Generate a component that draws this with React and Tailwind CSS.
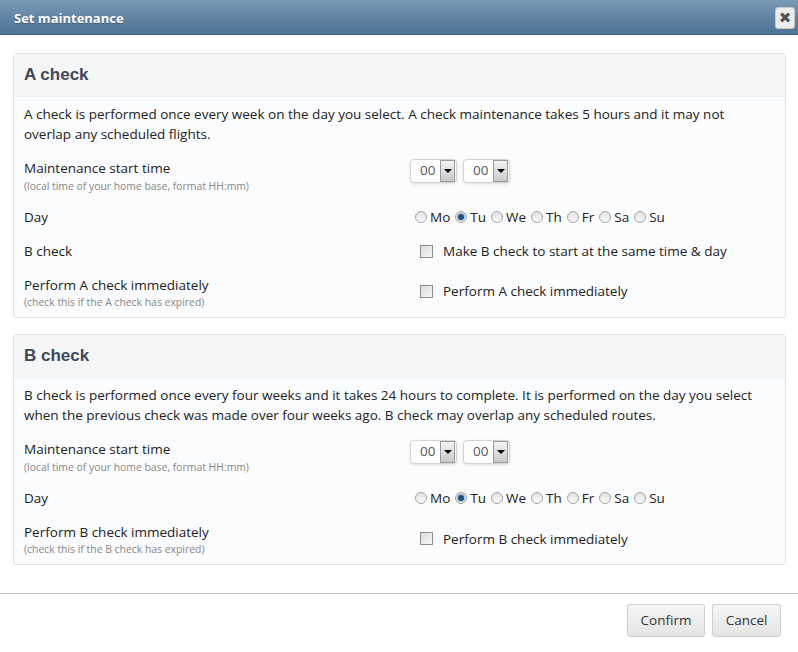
import React from "react";

const F = { fontFamily: '"Open Sans", "DejaVu Sans", sans-serif' };

function Select() {
  return (
    <div className="flex items-center h-[24px] w-[47px] rounded-[4px] border border-[#d4d4d4] bg-white shadow-[0_1px_3px_rgba(0,0,0,0.12)] pl-[9px] pr-[1px]">
      <span className="text-[13.5px] text-[#555] flex-1 leading-none">00</span>
      <div className="w-[15px] h-[22px] border border-[#9a9a9a] bg-gradient-to-b from-[#f4f4f4] to-[#c9c9c9] flex items-center justify-center">
        <div className="w-0 h-0 border-l-[4px] border-r-[4px] border-t-[4px] border-l-transparent border-r-transparent border-t-black" />
      </div>
    </div>
  );
}

function Radio({ label, checked }) {
  return (
    <div className="flex items-center mr-[5px]">
      <div className="w-[12px] h-[12px] rounded-full border border-[#a5a5a5] bg-gradient-to-b from-[#e2e2e2] to-[#fafafa] flex items-center justify-center">
        {checked && <div className="w-[6px] h-[6px] rounded-full bg-[#24527a] shadow-[0_0_1px_1px_rgba(90,150,200,0.6)]" />}
      </div>
      <span className="ml-[3px] text-[13.5px] text-[#222]">{label}</span>
    </div>
  );
}

function Check({ label }) {
  return (
    <div className="flex items-center pl-[10px]">
      <div className="w-[13px] h-[13px] border border-[#8e8e8e] bg-gradient-to-br from-[#dcdcdc] to-[#f8f8f8]" />
      <span className="ml-[10px] text-[13.5px] text-[#222]">{label}</span>
    </div>
  );
}

function Days() {
  const d = ["Mo", "Tu", "We", "Th", "Fr", "Sa", "Su"];
  return (
    <div className="flex items-center pl-[5px]">
      {d.map((x) => (
        <Radio key={x} label={x} checked={x === "Tu"} />
      ))}
    </div>
  );
}

function Label({ title, sub, tight }) {
  return (
    <div className="w-[386px] shrink-0">
      <div className="text-[13.5px] leading-[20px] text-[#222]">{title}</div>
      {sub && (
        <div className={tight ? "text-[10.4px] leading-[14px] text-[#888]" : "text-[10.4px] leading-[16px] text-[#888]"}>{sub}</div>
      )}
    </div>
  );
}

function Panel({ title, desc, rows }) {
  return (
    <div className="border border-[#dfe3e6] rounded-[3px] bg-[#fbfcfd]">
      <div className="h-[43px] bg-[#f4f6f8] px-[10px] flex items-center border-b border-[#eef1f3]">
        <span className="text-[17px] font-bold text-[#3e4857]" style={{ fontFamily: '"Liberation Sans", Arial, sans-serif' }}>{title}</span>
      </div>
      <div className="px-[10px] pt-[7px] pb-[8px]">
        <p className="text-[13.5px] leading-[20px] text-[#222] pr-[20px]">{desc}</p>
        {rows}
      </div>
    </div>
  );
}

export default function App() {
  return (
    <div className="w-[798px] h-[652px] bg-white flex flex-col" style={F}>
      <div className="h-[35px] shrink-0 bg-gradient-to-b from-[#7b9ab5] via-[#6385a5] to-[#4d7295] border-b border-[#3f6282] flex items-center justify-between pl-[14px] pr-[3px]">
        <span className="text-white font-bold text-[13px] mt-[3px]" style={{ textShadow: "0 1px 1px rgba(0,0,0,0.3)" }}>Set maintenance</span>
        <div className="w-[20px] h-[22px] mt-[1px] rounded-[3px] bg-[#ececec] border border-[#c8c8c8] flex items-center justify-center text-[#555] text-[15px] font-bold leading-none">
          ✖
        </div>
      </div>
      <div className="pl-[13px] pr-[12px] pt-[18px]">
        <Panel
          title="A check"
          desc="A check is performed once every week on the day you select. A check maintenance takes 5 hours and it may not overlap any scheduled flights."
          rows={
            <>
              <div className="flex items-start mt-[14px]">
                <Label title="Maintenance start time" sub="(local time of your home base, format HH:mm)" />
                <div className="flex gap-[6px] mt-[1px]"><Select /><Select /></div>
              </div>
              <div className="flex items-center mt-[13px]">
                <Label title="Day" />
                <Days />
              </div>
              <div className="flex items-center mt-[14px]">
                <Label title="B check" />
                <Check label="Make B check to start at the same time & day" />
              </div>
              <div className="flex items-center mt-[13px]">
                <Label title="Perform A check immediately" sub="(check this if the A check has expired)" tight />
                <Check label="Perform A check immediately" />
              </div>
            </>
          }
        />
        <div className="h-[16px]" />
        <Panel
          title="B check"
          desc="B check is performed once every four weeks and it takes 24 hours to complete. It is performed on the day you select when the previous check was made over four weeks ago. B check may overlap any scheduled routes."
          rows={
            <>
              <div className="flex items-start mt-[14px]">
                <Label title="Maintenance start time" sub="(local time of your home base, format HH:mm)" />
                <div className="flex gap-[6px] mt-[1px]"><Select /><Select /></div>
              </div>
              <div className="flex items-center mt-[13px]">
                <Label title="Day" />
                <Days />
              </div>
              <div className="flex items-center mt-[14px]">
                <Label title="Perform B check immediately" sub="(check this if the B check has expired)" tight />
                <Check label="Perform B check immediately" />
              </div>
            </>
          }
        />
      </div>
      <div className="mt-[28px] border-t border-[#c4c4c4] flex justify-end gap-[7px] pr-[17px] pt-[10px]">
        <button className="h-[33px] w-[78px] rounded-[3px] border border-[#cfcfcf] bg-gradient-to-b from-[#f6f6f6] to-[#e4e4e4] text-[13.5px] text-[#333]">Confirm</button>
        <button className="h-[33px] w-[69px] rounded-[3px] border border-[#cfcfcf] bg-gradient-to-b from-[#f6f6f6] to-[#e4e4e4] text-[13.5px] text-[#333]">Cancel</button>
      </div>
    </div>
  );
}
